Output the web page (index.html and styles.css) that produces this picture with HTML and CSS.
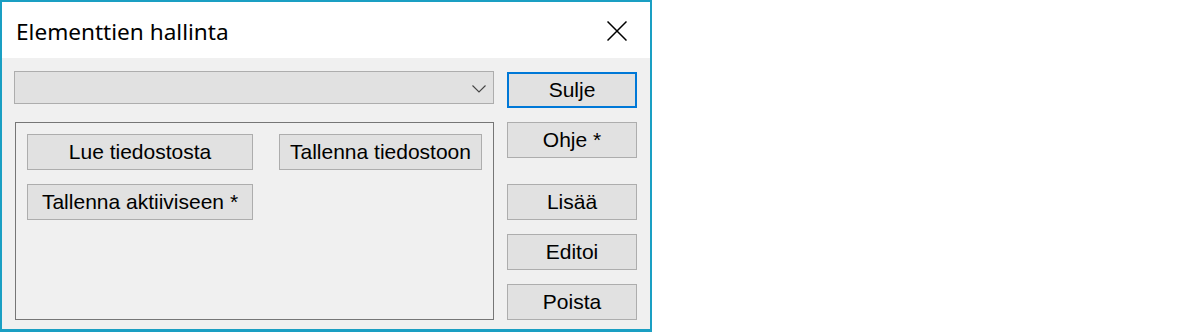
FILE: index.html
```html
<!DOCTYPE html>
<html lang="fi">
<head>
<meta charset="utf-8">
<title>Elementtien hallinta</title>
<link rel="stylesheet" href="styles.css">
</head>
<body>
<div class="window">
  <div class="titlebar">
    <span class="title">Elementtien hallinta</span>
    <span class="close">
      <svg width="20" height="20" viewBox="0 0 20 20"><path d="M0.5 0.5 L19.5 19.5 M19.5 0.5 L0.5 19.5" stroke="#000" stroke-width="1.5" fill="none"/></svg>
    </span>
  </div>
  <div class="content">
    <div class="left">
      <div class="combo">
        <svg width="14" height="8" viewBox="0 0 14 8"><polyline points="0.5,0.5 7,7 13.5,0.5" stroke="#444" stroke-width="1.1" fill="none"/></svg>
      </div>
      <div class="group">
        <button class="btn w1">Lue tiedostosta</button>
        <button class="btn w2">Tallenna tiedostoon</button>
        <button class="btn w1">Tallenna aktiiviseen *</button>
      </div>
    </div>
    <div class="right">
      <button class="btn side default">Sulje</button>
      <button class="btn side">Ohje *</button>
      <button class="btn side gap-big">Lisää</button>
      <button class="btn side">Editoi</button>
      <button class="btn side">Poista</button>
    </div>
  </div>
</div>
</body>
</html>
```
FILE: styles.css
```css
html, body {
  margin: 0;
  padding: 0;
  background: #ffffff;
}
.window {
  width: 652px;
  height: 332px;
  box-sizing: border-box;
  border: 2px solid #1a9fc3;
  border-bottom-width: 3px;
  display: flex;
  flex-direction: column;
  background: #f0f0f0;
}
.titlebar {
  height: 56px;
  flex: none;
  background: #ffffff;
  display: flex;
  align-items: center;
  justify-content: space-between;
  padding: 0 23px 0 14px;
}
.title {
  font-family: "Noto Sans", "Open Sans", sans-serif;
  font-size: 22.6px;
  color: #000;
  margin-top: 2px;
}
.close {
  display: flex;
  width: 20px;
  height: 20px;
  margin-top: 2px;
}
.content {
  flex: 1;
  display: grid;
  grid-template-columns: 480px 130px;
  column-gap: 13px;
  padding: 13px 13px 0 12px;
  align-items: start;
}
.left {
  display: flex;
  flex-direction: column;
}
.combo {
  height: 33px;
  box-sizing: border-box;
  border: 1px solid #adadad;
  background: #e1e1e1;
  display: flex;
  align-items: center;
  justify-content: flex-end;
  padding: 2px 7px 0 0;
}
.combo svg {
  display: block;
}
.group {
  margin: 18px 0 0 1px;
  height: 198px;
  box-sizing: border-box;
  border: 1px solid #767676;
  padding: 11px;
  display: grid;
  grid-template-columns: 226px 203px;
  grid-auto-rows: 36px;
  column-gap: 26px;
  row-gap: 14px;
  align-content: start;
}
.btn {
  font-family: "Liberation Sans", Arial, sans-serif;
  font-size: 21px;
  color: #000;
  background: #e1e1e1;
  border: 1px solid #adadad;
  box-sizing: border-box;
  height: 36px;
  margin: 0;
  padding: 0 0 1px 0;
  display: flex;
  align-items: center;
  justify-content: center;
}
.right {
  display: flex;
  flex-direction: column;
}
.side {
  width: 130px;
  margin-top: 14px;
}
.side.default {
  margin-top: 1px;
  border: 2px solid #0078d7;
}
.side.gap-big {
  margin-top: 26px;
}
```
